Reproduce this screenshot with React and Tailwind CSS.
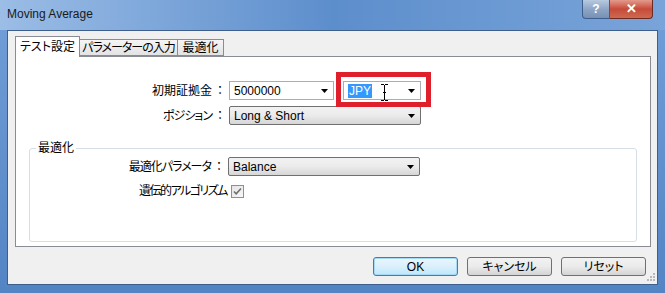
import React from "react";

const jp = "font-['Liberation_Sans','Noto_Sans_CJK_JP',sans-serif] [font-feature-settings:'palt']";

function Arrow() {
  return (
    <svg width="7" height="4" viewBox="0 0 7 4" className="shrink-0">
      <path d="M0 0h7L3.5 4z" fill="#000" />
    </svg>
  );
}

// label with the full-width colon kept at its normal width
function Label({ width, text, tight = false }) {
  return (
    <div className="whitespace-nowrap text-right" style={{ width }}>
      <span className={tight ? "tracking-[-1px]" : ""}>{text}</span>
      <span className="ml-[2px] [font-feature-settings:normal]">：</span>
    </div>
  );
}

// editable combo (white field, bare arrow) or drop list (grey button face)
function Combo({ width, children, flat = false }) {
  return (
    <div
      className={`flex h-[19px] items-center justify-between border pl-[4px] pr-[5px] text-[12px] text-black ${
        flat ? "border-[#abadb3] bg-white" : "rounded-[2px] border-[#707070] bg-gradient-to-b from-[#f2f2f2] via-[#ebebeb] to-[#d6d6d6]"
      }`}
      style={{ width }}
    >
      <div className="flex items-center">{children}</div>
      <Arrow />
    </div>
  );
}

function Button({ children, focused = false }) {
  return (
    <button
      className={`h-[19px] w-[85px] rounded-[3px] border text-[12px] leading-none text-black ${jp} ${
        focused
          ? "border-[#3c7fb1] bg-gradient-to-b from-[#eaf6fd] via-[#d9f0fc] to-[#bee6fd] shadow-[inset_0_0_0_1px_#a7d9f5]"
          : "border-[#707070] bg-gradient-to-b from-[#f2f2f2] via-[#ebebeb] to-[#d4d4d4]"
      }`}
    >
      {children}
    </button>
  );
}

function App() {
  return (
    <div className={`flex h-[293px] w-[665px] flex-col overflow-hidden bg-gradient-to-b from-[#729fd8] to-[#5384c4] ${jp}`}>
      {/* title bar */}
      <div className="flex h-[30px] shrink-0 items-start justify-between bg-gradient-to-r from-[#9bbde6] via-[#5d8ecc] to-[#79a4d9] pl-[7px] pr-[12px]">
        <div className="pt-[5px] text-[12px] text-[#1a1a1a]">Moving Average</div>
        <div className="flex h-[19px]">
          <div className="flex w-[28px] items-center justify-center rounded-bl-[4px] border border-t-0 border-[#3d5f8c] bg-gradient-to-b from-[#b8c9df] via-[#8ea6c6] to-[#7890b3] text-[12px] font-bold text-white">
            ?
          </div>
          <div className="flex w-[43px] items-center justify-center rounded-br-[4px] border border-l-0 border-t-0 border-[#6e2a25] bg-gradient-to-b from-[#e39a8c] via-[#c7493a] to-[#cd6a4f] text-[13px] font-bold text-white">
            ✕
          </div>
        </div>
      </div>

      {/* window body */}
      <div className="mx-[7px] mb-[8px] flex flex-1 flex-col border border-[#3e5f8c] bg-[#f0f0f0] pl-[7px] pr-[5px] pt-[5px]">
        {/* tabs */}
        <div className="flex h-[20px] items-end whitespace-nowrap text-[12px] text-black">
          <div className="relative z-10 -mb-px flex h-[21px] w-[65px] items-center justify-center border border-b-0 border-[#898c95] bg-white">
            テスト設定
          </div>
          <div className="flex h-[17px] w-[98px] items-center justify-center border border-l-0 border-[#898c95] bg-gradient-to-b from-[#f5f5f5] to-[#e3e3e3] tracking-[-1px]">
            パラメーターの入力
          </div>
          <div className="flex h-[17px] w-[46px] items-center justify-center border border-l-0 border-[#898c95] bg-gradient-to-b from-[#f5f5f5] to-[#e3e3e3]">
            最適化
          </div>
        </div>

        {/* tab panel */}
        <div className="flex h-[191px] w-[636px] flex-col border border-[#898c95] bg-white pt-[24px] text-[12px] text-black">
          <div className="flex items-center">
            <Label width={210} text="初期証拠金" />
            <div className="ml-[3px]">
              <Combo width={105} flat>
                5000000
              </Combo>
            </div>
            <div className="relative ml-[9px]">
              <Combo width={78} flat>
                <span className="bg-[#3399ff] px-[1px] leading-[14px] text-white">JPY</span>
                <svg width="9" height="17" viewBox="0 0 9 17" className="ml-[8px] mt-[3px]">
                  <path d="M1 0.5h3M5 0.5h3M4.5 1v15M1 16.5h3M5 16.5h3M3 8.5h3" stroke="#000" strokeWidth="1" fill="none" />
                </svg>
              </Combo>
              <div className="pointer-events-none absolute left-[-7px] top-[-9px] h-[35px] w-[95px] border-[5px] border-[#df1f2b]" />
            </div>
          </div>
          <div className="mt-[6px] flex items-center">
            <Label width={210} text="ポジション" tight />
            <div className="ml-[3px]">
              <Combo width={192}>Long &amp; Short</Combo>
            </div>
          </div>

          <fieldset className="mx-[13px] mt-[16px] h-[101px] rounded-[3px] border border-[#d5dfe5] px-0 pb-0">
            <legend className="ml-[6px] px-[2px] text-[12px] leading-[14px]">最適化</legend>
            <div className="mt-[2px] flex items-center">
              <Label width={195} text="最適化パラメータ" tight />
              <div className="ml-[3px]">
                <Combo width={192}>Balance</Combo>
              </div>
            </div>
            <div className="mt-[6px] flex items-center">
              <div className="w-[197px] whitespace-nowrap text-right tracking-[-1.5px]">遺伝的アルゴリズム</div>
              <div className="ml-[4px] flex h-[13px] w-[13px] items-center justify-center border border-[#8f8f8f] bg-gradient-to-br from-[#e4e4e4] to-[#f8f8f8]">
                <svg width="9" height="9" viewBox="0 0 9 9">
                  <path d="M1 4.5l2.2 2.3L8 1.5" stroke="#6f6f6f" strokeWidth="1.6" fill="none" />
                </svg>
              </div>
            </div>
          </fieldset>
        </div>

        {/* buttons */}
        <div className="mt-[10px] flex justify-end gap-[9px] pr-[6px]">
          <Button focused>OK</Button>
          <Button>キャンセル</Button>
          <Button>リセット</Button>
        </div>
        <div className="mr-[-4px] mt-[-3px] flex justify-end">
          <svg width="9" height="9" viewBox="0 0 9 9">
            <g fill="#b9b9b9">
              <rect x="6" y="0" width="2" height="2" />
              <rect x="3" y="3" width="2" height="2" />
              <rect x="6" y="3" width="2" height="2" />
              <rect x="0" y="6" width="2" height="2" />
              <rect x="3" y="6" width="2" height="2" />
              <rect x="6" y="6" width="2" height="2" />
            </g>
          </svg>
        </div>
      </div>
    </div>
  );
}

export default App;
